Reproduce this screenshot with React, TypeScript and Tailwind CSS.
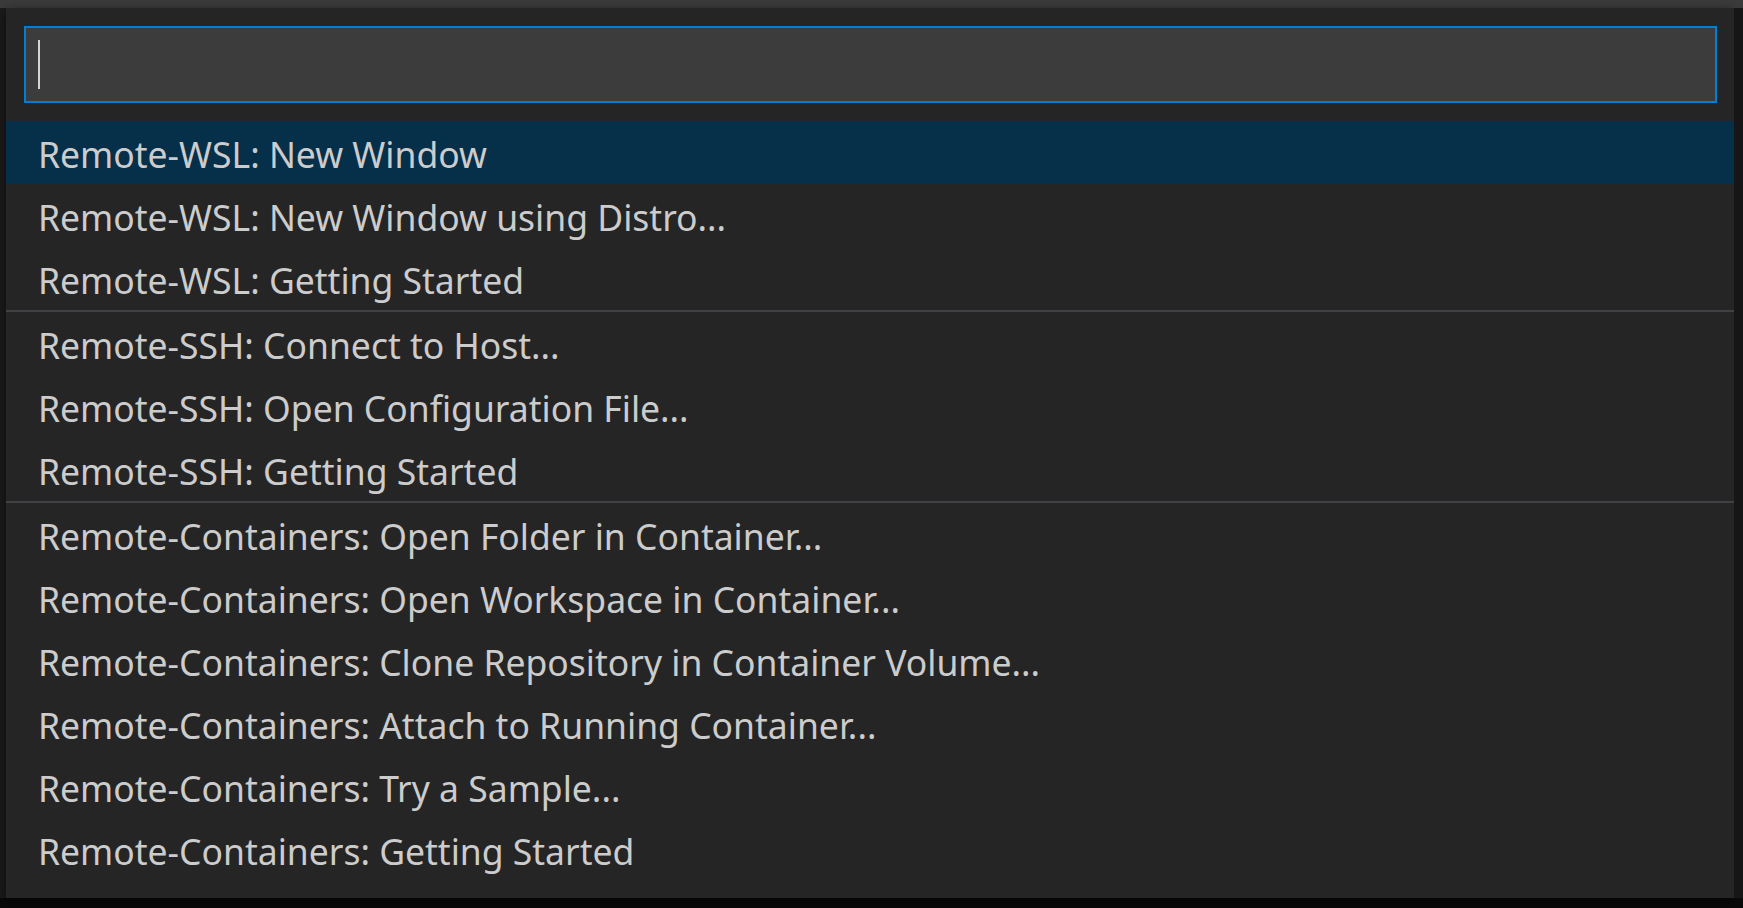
import React from "react";

const groups: string[][] = [
  [
    "Remote-WSL: New Window",
    "Remote-WSL: New Window using Distro...",
    "Remote-WSL: Getting Started",
  ],
  [
    "Remote-SSH: Connect to Host...",
    "Remote-SSH: Open Configuration File...",
    "Remote-SSH: Getting Started",
  ],
  [
    "Remote-Containers: Open Folder in Container...",
    "Remote-Containers: Open Workspace in Container...",
    "Remote-Containers: Clone Repository in Container Volume...",
    "Remote-Containers: Attach to Running Container...",
    "Remote-Containers: Try a Sample...",
    "Remote-Containers: Getting Started",
  ],
];

export default function App() {
  return (
    <div
      className="w-[1743px] h-[908px] bg-[#0a0a0a] flex flex-col overflow-hidden"
      style={{ fontFamily: '"Noto Sans", "Open Sans", sans-serif' }}
    >
      <div className="h-[8px] bg-[#3b3b3b] shrink-0" />
      <div className="flex h-[890px] shrink-0">
        <div className="w-[6px] bg-[#1b1b1b]" />
        <div className="w-[1728px] bg-[#252526] flex flex-col shadow-[0_4px_12px_rgba(0,0,0,0.6)]">
          <div className="pt-[18px] pl-[18px] pr-[17px] pb-[18px]">
            <div className="h-[77px] border-2 border-[#007fd4] bg-[#3c3c3c] flex items-center pl-[12px]">
              <div className="w-[2px] h-[49px] bg-[#d4d4d4]" />
            </div>
          </div>
          <div className="flex flex-col">
            {groups.map((g, gi) => (
              <div
                key={gi}
                className={gi > 0 ? "border-t-2 border-[#404045]" : ""}
              >
                {g.map((t, i) => {
                  const selected = gi === 0 && i === 0;
                  return (
                    <div
                      key={i}
                      className={`h-[63px] pt-[4px] pl-[32px] text-[35.5px] leading-[59px] text-[#cccccc] whitespace-nowrap ${
                        selected ? "bg-[#062f4a]" : ""
                      }`}
                    >
                      {t}
                    </div>
                  );
                })}
              </div>
            ))}
          </div>
        </div>
        <div className="flex-1 bg-[#161616]" />
      </div>
    </div>
  );
}
